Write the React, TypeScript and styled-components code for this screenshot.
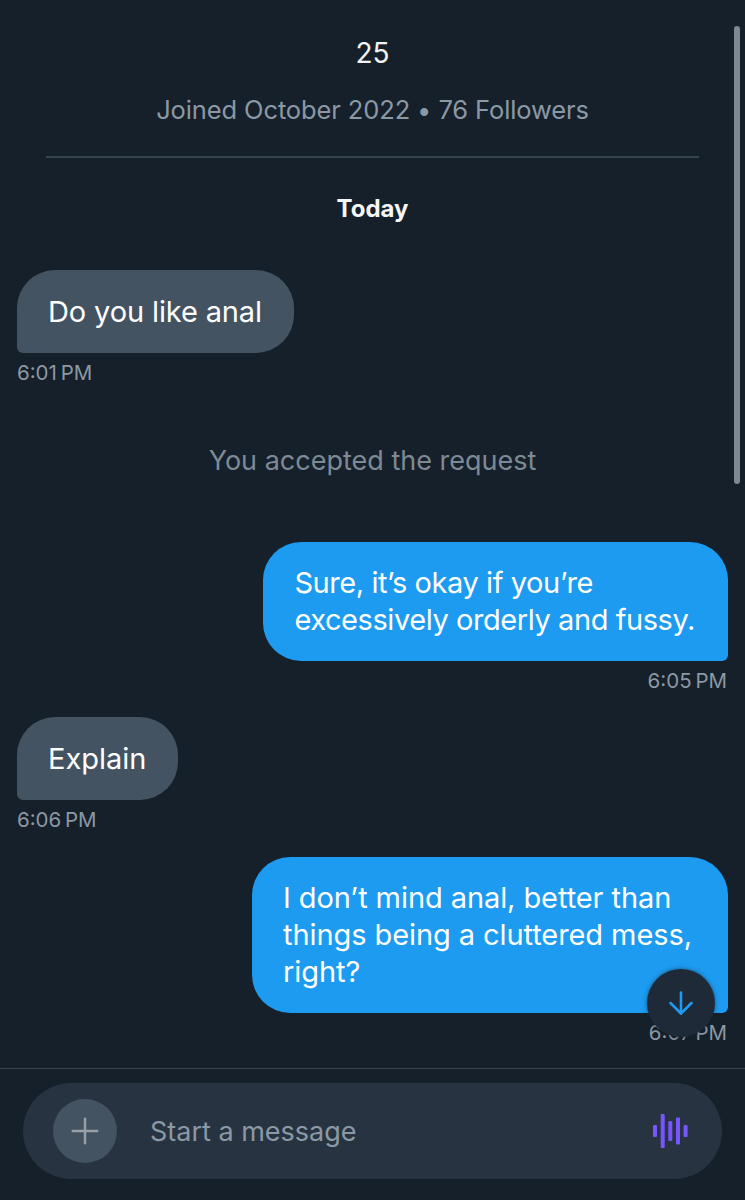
import styled, { createGlobalStyle } from "styled-components";
import { ArrowDown, Plus } from "lucide-react";

const GlobalStyle = createGlobalStyle`
  html, body {
    margin: 0;
    padding: 0;
    background: #16202a;
  }
  * {
    box-sizing: border-box;
  }
`;

const messages = [
  { id: 1, mine: false, text: ["Do you like anal"], time: "6:01 PM", gap: 0, tracking: -0.13, end: 32 },
  { id: 2, mine: true, text: ["Sure, it’s okay if you’re", "excessively orderly and fussy."], time: "6:05 PM", gap: 157, tracking: -0.43, end: 33 },
  { id: 3, mine: false, text: ["Explain"], time: "6:06 PM", gap: 24, tracking: 0, end: 32 },
  { id: 4, mine: true, text: ["I don’t mind anal, better than", "things being a cluttered mess,", "right?"], time: "6:07 PM", gap: 25, tracking: -0.08, end: 36 },
];

const bars = [
  { x: 1, h: 12 },
  { x: 8.7, h: 34 },
  { x: 16.3, h: 20 },
  { x: 24, h: 27 },
  { x: 31.6, h: 12 },
];

const App = () => {
  return (
    <Page>
      <GlobalStyle />
      <Scrollbar />
      <Header>
        <Name>25</Name>
        <Joined>Joined October 2022 • 76 Followers</Joined>
        <Divider />
        <DayLabel>Today</DayLabel>
      </Header>
      <Feed>
        {messages.map((m) => (
          <Message key={m.id} mine={m.mine} gap={m.gap}>
            {m.id === 2 && <Notice>You accepted the request</Notice>}
            <Bubble mine={m.mine} tracking={m.tracking} end={m.end}>
              {m.text.map((line) => (
                <Line key={line}>{line}</Line>
              ))}
            </Bubble>
            <Time>{m.time}</Time>
          </Message>
        ))}
        <ScrollButton>
          <ArrowDown size={36} strokeWidth={1.7} color="#1d9bf0" />
        </ScrollButton>
      </Feed>
      <Footer>
        <Composer>
          <AddButton>
            <Plus size={42} strokeWidth={1.4} color="#9a9fa6" />
          </AddButton>
          <Placeholder>Start a message</Placeholder>
          <svg width="36" height="36" viewBox="0 0 36 36">
            {bars.map((b) => (
              <rect key={b.x} x={b.x} y={18 - b.h / 2} width="4" height={b.h} rx="1" fill="#7856ff" />
            ))}
          </svg>
        </Composer>
      </Footer>
    </Page>
  );
};

export default App;

const Page = styled.div`
  width: 745px;
  height: 1200px;
  position: relative;
  overflow: hidden;
  display: flex;
  flex-direction: column;
  background: #16202a;
  font-family: Inter, "Liberation Sans", sans-serif;
`;

const Scrollbar = styled.div`
  position: absolute;
  top: 26px;
  right: 5px;
  width: 6px;
  height: 458px;
  border-radius: 3px;
  background: #7f8790;
`;

const Header = styled.div`
  display: flex;
  flex-direction: column;
  align-items: center;
  padding-top: 36px;
`;

const Name = styled.div`
  font-size: 28px;
  line-height: 34px;
  color: #f2f4f5;
`;

const Joined = styled.div`
  margin-top: 24px;
  font-size: 25.5px;
  line-height: 32px;
  letter-spacing: -0.12px;
  color: #8b98a5;
`;

const Divider = styled.div`
  width: 653px;
  height: 2px;
  margin-top: 30px;
  background: #38444d;
`;

const DayLabel = styled.div`
  margin-top: 36px;
  font-size: 24px;
  line-height: 30px;
  font-weight: 700;
  color: #f5f7f8;
`;

const Feed = styled.div`
  position: relative;
  flex: 1;
  display: flex;
  flex-direction: column;
  padding: 46px 17px 0;
`;

const Message = styled.div<{ mine: boolean; gap: number }>`
  display: flex;
  flex-direction: column;
  align-items: ${(p) => (p.mine ? "flex-end" : "flex-start")};
  margin-top: ${(p) => p.gap}px;
  position: relative;
`;

const Notice = styled.div`
  position: absolute;
  top: -98px;
  left: 0;
  right: 0;
  text-align: center;
  font-size: 27px;
  line-height: 34px;
  color: #7d8a96;
`;

const Bubble = styled.div<{ mine: boolean; tracking: number; end: number }>`
  padding: 22.5px ${(p) => p.end}px 23px 31px;
  font-size: 29px;
  line-height: 37px;
  letter-spacing: ${(p) => p.tracking}px;
  color: #fff;
  white-space: nowrap;
  background: ${(p) => (p.mine ? "#1d9bf0" : "#435362")};
  border-radius: ${(p) => (p.mine ? "38px 38px 6px 38px" : "38px 38px 38px 6px")};
`;

const Line = styled.div``;

const Time = styled.div`
  margin-top: 8px;
  margin-right: 1px;
  font-size: 20.5px;
  line-height: 24px;
  word-spacing: -2px;
  color: #8b98a5;
`;

const ScrollButton = styled.div`
  position: absolute;
  right: 30px;
  bottom: 31px;
  width: 68px;
  height: 68px;
  border-radius: 50%;
  display: flex;
  align-items: center;
  justify-content: center;
  background: #1e2a38;
  box-shadow: 0 0 4px rgba(22, 32, 42, 0.6);
`;

const Footer = styled.div`
  height: 132px;
  padding: 14px 23px 0;
  border-top: 1px solid #38444d;
`;

const Composer = styled.div`
  width: 699px;
  height: 96px;
  display: flex;
  align-items: center;
  padding: 0 34px 0 30px;
  border-radius: 48px;
  background: #273340;
`;

const AddButton = styled.div`
  width: 64px;
  height: 64px;
  border-radius: 50%;
  display: flex;
  align-items: center;
  justify-content: center;
  background: #435362;
`;

const Placeholder = styled.div`
  flex: 1;
  margin-left: 33px;
  padding-top: 2px;
  font-size: 27px;
  line-height: 34px;
  color: #8b98a5;
`;
